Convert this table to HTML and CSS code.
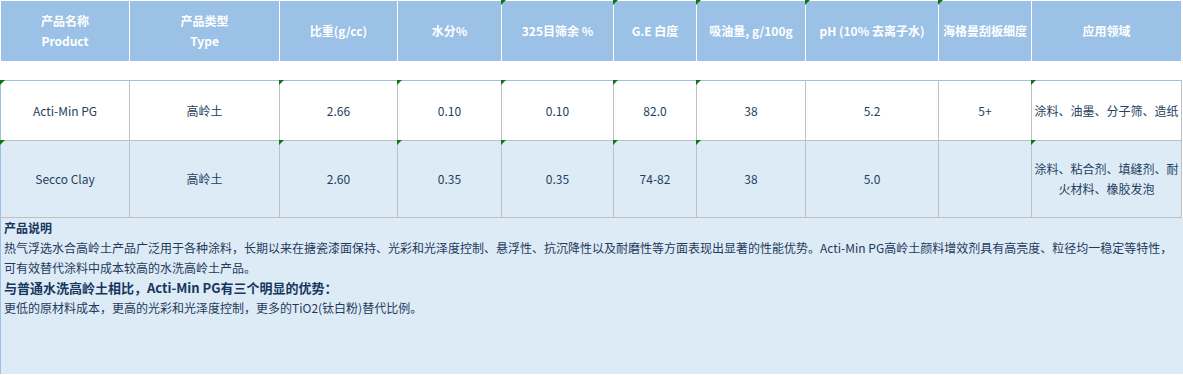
FILE: index.html
```html
<!DOCTYPE html>
<html lang="zh-CN">
<head>
<meta charset="utf-8">
<title>Acti-Min PG</title>
<link rel="stylesheet" href="styles.css">
</head>
<body>
<div class="sheet">
  <div class="grid head">
    <div class="cell"><span>产品名称</span><span>Product</span></div>
    <div class="cell"><span>产品类型</span><span>Type</span></div>
    <div class="cell">比重(g/cc)</div>
    <div class="cell">水分%</div>
    <div class="cell mark">325目筛余 %</div>
    <div class="cell mark">G.E 白度</div>
    <div class="cell mark">吸油量, g/100g</div>
    <div class="cell mark">pH (10% 去离子水)</div>
    <div class="cell mark">海格曼刮板细度</div>
    <div class="cell">应用领域</div>
  </div>
  <div class="spacer"></div>
  <div class="grid row first">
    <div class="cell mark">Acti-Min PG</div>
    <div class="cell">高岭土</div>
    <div class="cell mark">2.66</div>
    <div class="cell mark">0.10</div>
    <div class="cell mark">0.10</div>
    <div class="cell mark">82.0</div>
    <div class="cell mark">38</div>
    <div class="cell">5.2</div>
    <div class="cell">5+</div>
    <div class="cell mark app">涂料、油墨、分子筛、造纸</div>
  </div>
  <div class="grid row alt">
    <div class="cell mark">Secco Clay</div>
    <div class="cell">高岭土</div>
    <div class="cell mark">2.60</div>
    <div class="cell mark">0.35</div>
    <div class="cell mark">0.35</div>
    <div class="cell mark">74-82</div>
    <div class="cell mark">38</div>
    <div class="cell">5.0</div>
    <div class="cell"></div>
    <div class="cell mark app">涂料、粘合剂、填缝剂、耐火材料、橡胶发泡</div>
  </div>
  <div class="desc">
    <h3 class="desc-title">产品说明</h3>
    <p class="desc-text">热气浮选水合高岭土产品广泛用于各种涂料，长期以来在搪瓷漆面保持、光彩和光泽度控制、悬浮性、抗沉降性以及耐磨性等方面表现出显著的性能优势。Acti-Min PG高岭土颜料增效剂具有高亮度、粒径均一稳定等特性，可有效替代涂料中成本较高的水洗高岭土产品。</p>
    <h3 class="desc-sub">与普通水洗高岭土相比，Acti-Min PG有三个明显的优势：</h3>
    <p class="desc-text">更低的原材料成本，更高的光彩和光泽度控制，更多的TiO2(钛白粉)替代比例。</p>
  </div>
</div>
</body>
</html>
```

FILE: styles.css
```css
* { box-sizing: border-box; }

html, body {
  margin: 0;
  padding: 0;
  background: #ffffff;
}

body {
  font-family: "Noto Sans CJK SC", "Noto Sans", sans-serif;
  font-size: 12px;
  color: #243f60;
}

.sheet {
  width: 1183px;
  height: 375px;
  overflow: hidden;
}

.grid {
  display: grid;
  grid-template-columns: 128px 149px 117px 103px 111px 82px 108px 132px 92px 149px;
  column-gap: 1px;
  width: 1182px;
}

.cell {
  position: relative;
  display: flex;
  flex-direction: column;
  align-items: center;
  justify-content: center;
  text-align: center;
  line-height: 20px;
}

.mark::before {
  content: "";
  position: absolute;
  left: -1px;
  top: -1px;
  width: 0;
  height: 0;
  border-top: 5px solid #0a7a0a;
  border-right: 5px solid transparent;
}

.head {
  background: #ffffff;
  border: 1px solid #ffffff;
  height: 62px;
}

.head .cell {
  background: #9bc2e6;
  color: #ffffff;
  font-weight: bold;
  font-size: 12px;
}

.spacer {
  height: 18px;
}

.row {
  background: #c0c0c0;
  border-left: 1px solid #9bc2e6;
  border-right: 1px solid #c0c0c0;
  border-bottom: 1px solid #c0c0c0;
}

.row.first {
  border-top: 1px solid #9bc2e6;
  height: 61px;
}

.row.alt {
  height: 77px;
}

.row.first .cell { background: #ffffff; }
.row.alt .cell { background: #ddebf7; }

.app {
  padding: 0 1px;
}

.desc {
  background: #ddebf7;
  border-left: 1px solid #9bc2e6;
  height: 156px;
  padding: 0 0 0 3px;
  line-height: 20px;
  color: #1f3a5a;
}

.desc-title,
.desc-sub {
  margin: 0;
  font-weight: bold;
  font-size: 12px;
  color: #17365d;
}

.desc-sub {
  font-size: 13px;
}

.desc-text {
  margin: 0;
  font-size: 12px;
  padding-right: 6px;
}
```
